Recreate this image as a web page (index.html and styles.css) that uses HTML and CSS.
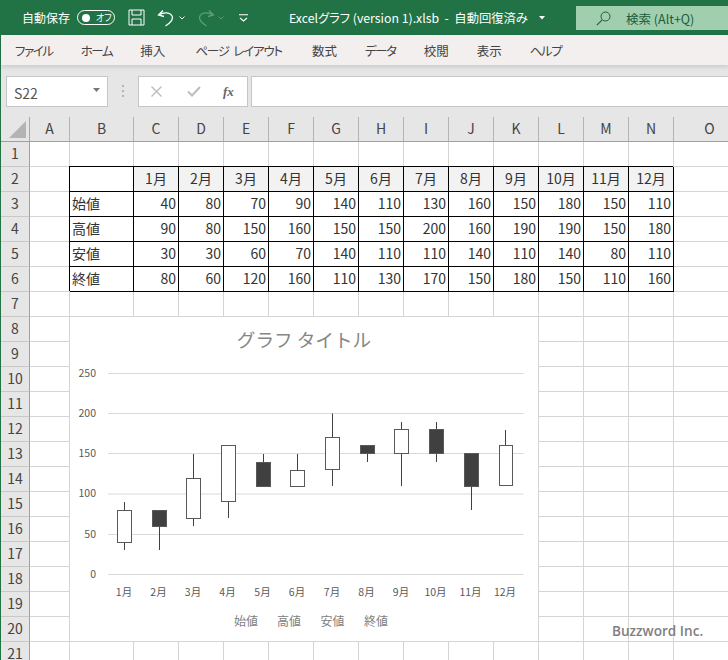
FILE: index.html
```html
<!DOCTYPE html>
<html lang="ja">
<head>
<meta charset="utf-8">
<title>Excelグラフ</title>
<link rel="stylesheet" href="styles.css">
</head>
<body>
<div class="app">
  <header class="titlebar">
    <span class="autosave">自動保存</span>
    <span class="toggle"><i class="knob"></i><span class="off">オフ</span></span>
    <svg class="ic save" viewBox="0 0 17 17"><path d="M1 1h15v15H1zM4 1v5h9V1M4 16v-6h9v6" fill="none" stroke="#fff" stroke-width="1"/></svg>
    <svg class="ic undo" viewBox="0 0 18 18"><path d="M6 1.5 1.5 6 7 7.5M1.8 6C6 3.500 12 2.500 14.800 6.500c2.200 3.500-1 7-6.300 10.500" fill="none" stroke="#fff" stroke-width="1.300"/></svg>
    <svg class="ic chev" viewBox="0 0 6 4"><path d="M.5.5 3 3 5.500.5" fill="none" stroke="#fff" stroke-width="1"/></svg>
    <svg class="ic redo" viewBox="0 0 18 18"><path d="M12 1.500 16.500 6 11 7.500M16.200 6C12 3.500 6 2.500 3.200 6.500 1 10 4.200 13.500 9.500 17" fill="none" stroke="#5f9c7c" stroke-width="1.300"/></svg>
    <svg class="ic chev chev2" viewBox="0 0 6 4"><path d="M.5.5 3 3 5.500.5" fill="none" stroke="#5f9c7c" stroke-width="1"/></svg>
    <svg class="ic cust" viewBox="0 0 9 8"><path d="M0 .8h9M1 4l3.500 3L8 4" fill="none" stroke="#fff" stroke-width="1.100"/></svg>
    <span class="doc">Excelグラフ (version 1).xlsb&nbsp; - &nbsp;自動回復済み</span>
    <svg class="ic doc-chev" viewBox="0 0 6 4"><path d="M0 0h6L3 3.500z" fill="#fff"/></svg>
    <div class="search">
      <svg class="ic glass" viewBox="0 0 15 15"><circle cx="9.500" cy="5.500" r="4.500" fill="none" stroke="#1d5c3a" stroke-width="1"/><path d="M6.200 8.800.8 14.200" stroke="#1d5c3a" stroke-width="1.100"/></svg>
      <span>検索 (Alt+Q)</span>
    </div>
  </header>

  <nav class="tabs">
    <span class="kana">ファイル</span><span class="kana">ホーム</span><span>挿入</span><span class="kana-long">ページ レイアウト</span><span>数式</span><span class="kana">データ</span><span>校閲</span><span>表示</span><span class="kana">ヘルプ</span>
  </nav>

  <section class="fbar">
    <div class="namebox"><span>S22</span><svg class="ic nb-arrow" viewBox="0 0 7 4"><path d="M0 0h7L3.500 4z" fill="#767676"/></svg></div>
    <svg class="ic dots" viewBox="0 0 2 12"><path d="M0 0h2v2H0zM0 5h2v2H0zM0 10h2v2H0z" fill="#b5b5b5"/></svg>
    <div class="fxbox">
      <svg class="ic cross" viewBox="0 0 11 11"><path d="M.5.5l10 10M10.500.5l-10 10" stroke="#bdbdbd" stroke-width="1.400" fill="none"/></svg>
      <svg class="ic check" viewBox="0 0 14 11"><path d="M1 5.500 5 9.500 13 1" stroke="#bdbdbd" stroke-width="2" fill="none"/></svg>
      <span class="fx">fx</span>
    </div>
    <div class="formula"></div>
  </section>

  <main class="sheet">
    <div class="corner"><svg class="tri" viewBox="0 0 17 17"><path d="M17 0v17H0z" fill="#b4b4b4"/></svg></div>
    <div class="ch">A</div><div class="ch">B</div><div class="ch">C</div><div class="ch">D</div><div class="ch">E</div><div class="ch">F</div><div class="ch">G</div><div class="ch">H</div><div class="ch">I</div><div class="ch">J</div><div class="ch">K</div><div class="ch">L</div><div class="ch">M</div><div class="ch">N</div><div class="ch">O</div>

    <div class="rh">1</div><div class="c"></div><div class="c"></div><div class="c"></div><div class="c"></div><div class="c"></div><div class="c"></div><div class="c"></div><div class="c"></div><div class="c"></div><div class="c"></div><div class="c"></div><div class="c"></div><div class="c"></div><div class="c"></div><div class="c"></div>

    <div class="rh">2</div><div class="c"></div><div class="c t"></div><div class="c t mon">1月</div><div class="c t mon">2月</div><div class="c t mon">3月</div><div class="c t mon">4月</div><div class="c t mon">5月</div><div class="c t mon">6月</div><div class="c t mon">7月</div><div class="c t mon">8月</div><div class="c t mon">9月</div><div class="c t mon">10月</div><div class="c t mon">11月</div><div class="c t mon">12月</div><div class="c"></div>

    <div class="rh">3</div><div class="c"></div><div class="c t lab">始値</div><div class="c t num">40</div><div class="c t num">80</div><div class="c t num">70</div><div class="c t num">90</div><div class="c t num">140</div><div class="c t num">110</div><div class="c t num">130</div><div class="c t num">160</div><div class="c t num">150</div><div class="c t num">180</div><div class="c t num">150</div><div class="c t num">110</div><div class="c"></div>

    <div class="rh">4</div><div class="c"></div><div class="c t lab">高値</div><div class="c t num">90</div><div class="c t num">80</div><div class="c t num">150</div><div class="c t num">160</div><div class="c t num">150</div><div class="c t num">150</div><div class="c t num">200</div><div class="c t num">160</div><div class="c t num">190</div><div class="c t num">190</div><div class="c t num">150</div><div class="c t num">180</div><div class="c"></div>

    <div class="rh">5</div><div class="c"></div><div class="c t lab">安値</div><div class="c t num">30</div><div class="c t num">30</div><div class="c t num">60</div><div class="c t num">70</div><div class="c t num">140</div><div class="c t num">110</div><div class="c t num">110</div><div class="c t num">140</div><div class="c t num">110</div><div class="c t num">140</div><div class="c t num">80</div><div class="c t num">110</div><div class="c"></div>

    <div class="rh">6</div><div class="c"></div><div class="c t lab">終値</div><div class="c t num">80</div><div class="c t num">60</div><div class="c t num">120</div><div class="c t num">160</div><div class="c t num">110</div><div class="c t num">130</div><div class="c t num">170</div><div class="c t num">150</div><div class="c t num">180</div><div class="c t num">150</div><div class="c t num">110</div><div class="c t num">160</div><div class="c"></div>

    <div class="rh">7</div><div class="c"></div><div class="c"></div><div class="c"></div><div class="c"></div><div class="c"></div><div class="c"></div><div class="c"></div><div class="c"></div><div class="c"></div><div class="c"></div><div class="c"></div><div class="c"></div><div class="c"></div><div class="c"></div><div class="c"></div>
    <div class="rh">8</div><div class="c"></div><div class="c"></div><div class="c"></div><div class="c"></div><div class="c"></div><div class="c"></div><div class="c"></div><div class="c"></div><div class="c"></div><div class="c"></div><div class="c"></div><div class="c"></div><div class="c"></div><div class="c"></div><div class="c"></div>
    <div class="rh">9</div><div class="c"></div><div class="c"></div><div class="c"></div><div class="c"></div><div class="c"></div><div class="c"></div><div class="c"></div><div class="c"></div><div class="c"></div><div class="c"></div><div class="c"></div><div class="c"></div><div class="c"></div><div class="c"></div><div class="c"></div>
    <div class="rh">10</div><div class="c"></div><div class="c"></div><div class="c"></div><div class="c"></div><div class="c"></div><div class="c"></div><div class="c"></div><div class="c"></div><div class="c"></div><div class="c"></div><div class="c"></div><div class="c"></div><div class="c"></div><div class="c"></div><div class="c"></div>
    <div class="rh">11</div><div class="c"></div><div class="c"></div><div class="c"></div><div class="c"></div><div class="c"></div><div class="c"></div><div class="c"></div><div class="c"></div><div class="c"></div><div class="c"></div><div class="c"></div><div class="c"></div><div class="c"></div><div class="c"></div><div class="c"></div>
    <div class="rh">12</div><div class="c"></div><div class="c"></div><div class="c"></div><div class="c"></div><div class="c"></div><div class="c"></div><div class="c"></div><div class="c"></div><div class="c"></div><div class="c"></div><div class="c"></div><div class="c"></div><div class="c"></div><div class="c"></div><div class="c"></div>
    <div class="rh">13</div><div class="c"></div><div class="c"></div><div class="c"></div><div class="c"></div><div class="c"></div><div class="c"></div><div class="c"></div><div class="c"></div><div class="c"></div><div class="c"></div><div class="c"></div><div class="c"></div><div class="c"></div><div class="c"></div><div class="c"></div>
    <div class="rh">14</div><div class="c"></div><div class="c"></div><div class="c"></div><div class="c"></div><div class="c"></div><div class="c"></div><div class="c"></div><div class="c"></div><div class="c"></div><div class="c"></div><div class="c"></div><div class="c"></div><div class="c"></div><div class="c"></div><div class="c"></div>
    <div class="rh">15</div><div class="c"></div><div class="c"></div><div class="c"></div><div class="c"></div><div class="c"></div><div class="c"></div><div class="c"></div><div class="c"></div><div class="c"></div><div class="c"></div><div class="c"></div><div class="c"></div><div class="c"></div><div class="c"></div><div class="c"></div>
    <div class="rh">16</div><div class="c"></div><div class="c"></div><div class="c"></div><div class="c"></div><div class="c"></div><div class="c"></div><div class="c"></div><div class="c"></div><div class="c"></div><div class="c"></div><div class="c"></div><div class="c"></div><div class="c"></div><div class="c"></div><div class="c"></div>
    <div class="rh">17</div><div class="c"></div><div class="c"></div><div class="c"></div><div class="c"></div><div class="c"></div><div class="c"></div><div class="c"></div><div class="c"></div><div class="c"></div><div class="c"></div><div class="c"></div><div class="c"></div><div class="c"></div><div class="c"></div><div class="c"></div>
    <div class="rh">18</div><div class="c"></div><div class="c"></div><div class="c"></div><div class="c"></div><div class="c"></div><div class="c"></div><div class="c"></div><div class="c"></div><div class="c"></div><div class="c"></div><div class="c"></div><div class="c"></div><div class="c"></div><div class="c"></div><div class="c"></div>
    <div class="rh">19</div><div class="c"></div><div class="c"></div><div class="c"></div><div class="c"></div><div class="c"></div><div class="c"></div><div class="c"></div><div class="c"></div><div class="c"></div><div class="c"></div><div class="c"></div><div class="c"></div><div class="c"></div><div class="c"></div><div class="c"></div>
    <div class="rh">20</div><div class="c"></div><div class="c"></div><div class="c"></div><div class="c"></div><div class="c"></div><div class="c"></div><div class="c"></div><div class="c"></div><div class="c"></div><div class="c"></div><div class="c"></div><div class="c"></div><div class="c"></div><div class="c"></div><div class="c"></div>
    <div class="rh">21</div><div class="c"></div><div class="c"></div><div class="c"></div><div class="c"></div><div class="c"></div><div class="c"></div><div class="c"></div><div class="c"></div><div class="c"></div><div class="c"></div><div class="c"></div><div class="c"></div><div class="c"></div><div class="c"></div><div class="c"></div>

    <svg class="chart" viewBox="70 317 468 324">
      <text class="ctitle" x="304" y="347">グラフ タイトル</text>
      <g class="grid">
        <path d="M108 373.500H523.500M108 413.500H523.500M108 453.500H523.500M108 494H523.500M108 534.500H523.500M108 574.500H523.500"/>
      </g>
      <g class="yaxis">
        <text x="96" y="377">250</text><text x="96" y="417">200</text><text x="96" y="457">150</text><text x="96" y="497">100</text><text x="96" y="537.500">50</text><text x="96" y="577.500">0</text>
      </g>
      <g class="wick">
        <path d="M124.500 502V550M159.500 526V550M193.500 454V526M228.500 502V518M263.500 454V462M297.500 454V470M332.500 413.500V486M367.500 454V462M401.500 422V486M436.500 422V462M471.500 486V510M505.500 430V446"/>
      </g>
      <g class="up">
        <rect x="117.500" y="510.500" width="14" height="32"/>
        <rect x="186.500" y="478.500" width="14" height="40"/>
        <rect x="221.500" y="445.500" width="14" height="56"/>
        <rect x="290.500" y="470.500" width="14" height="16"/>
        <rect x="325.500" y="437.500" width="14" height="32"/>
        <rect x="394.500" y="429.500" width="14" height="24"/>
        <rect x="499.500" y="445.500" width="13" height="40"/>
      </g>
      <g class="down">
        <rect x="152.500" y="510.500" width="14" height="16"/>
        <rect x="256.500" y="462.500" width="14" height="24"/>
        <rect x="360.500" y="445.500" width="14" height="8"/>
        <rect x="429.500" y="429.500" width="14" height="24"/>
        <rect x="464.500" y="453.500" width="14" height="33"/>
      </g>
      <g class="xaxis">
        <text x="124" y="596">1月</text><text x="158.500" y="596">2月</text><text x="193" y="596">3月</text><text x="227.500" y="596">4月</text><text x="262.500" y="596">5月</text><text x="297" y="596">6月</text><text x="332" y="596">7月</text><text x="366.500" y="596">8月</text><text x="401" y="596">9月</text><text x="435.500" y="596">10月</text><text x="470.500" y="596">11月</text><text x="505" y="596">12月</text>
      </g>
      <g class="legend">
        <text x="246" y="626">始値</text><text x="289" y="626">高値</text><text x="332.500" y="626">安値</text><text x="376" y="626">終値</text>
      </g>
    </svg>
  </main>
  <div class="mark">Buzzword Inc.</div>
</div>
</body>
</html>
```
FILE: styles.css
```css
html, body { margin: 0; padding: 0; }
body { width: 728px; height: 660px; overflow: hidden; background: #fff; }
.app {
  position: relative;
  width: 728px; height: 660px; overflow: hidden;
  font-family: "Noto Sans CJK JP", "Noto Sans", sans-serif;
  color: #333;
}
.ic { display: block; flex: none; }

/* title bar */
.titlebar {
  height: 35px; background: #217346; color: #fff;
  display: flex; align-items: center;
  padding-left: 22px; box-sizing: border-box;
  font-size: 12px;
}
.autosave { width: 48px; white-space: nowrap; font-feature-settings: "palt"; font-size: 12px; }
.toggle {
  margin-left: 7px; width: 38px; height: 15px; box-sizing: border-box;
  border: 1px solid #fff; border-radius: 8px;
  display: flex; align-items: center; padding-left: 4px;
}
.knob { width: 8px; height: 8px; border-radius: 50%; background: #fff; flex: none; }
.off { font-size: 9px; margin-left: 6px; line-height: 12px; font-feature-settings: "palt"; }
.save { width: 17px; height: 17px; margin-left: 13px; }
.undo { width: 18px; height: 18px; margin-left: 12px; }
.chev { width: 6px; height: 4px; margin-left: 4px; }
.redo { width: 18px; height: 18px; margin-left: 12px; }
.chev2 { margin-left: 3px; }
.cust { width: 9px; height: 8px; margin-left: 15px; }
.doc { margin-left: 41px; width: 247px; white-space: nowrap; font-size: 12.300px; font-feature-settings: "palt"; }
.doc-chev { width: 6px; height: 4px; margin-left: 3px; }
.search {
  margin-left: 31px; align-self: flex-start; margin-top: 6px;
  width: 152px; height: 24px; background: #a0cfb0; color: #1d5c3a;
  display: flex; align-items: center; padding-left: 20px; box-sizing: border-box;
  font-size: 12.500px;
}
.glass { width: 15px; height: 15px; margin-right: 15px; }

/* ribbon tabs */
.tabs {
  position: relative;
  height: 30px; background: #f3efef;
  display: flex; align-items: center; gap: 28px;
  padding-left: 14px;
  margin-left: 1px;
  font-size: 12.500px; color: #444;
  font-feature-settings: "palt";
  box-shadow: 0 2px 4px rgba(0,0,0,.12);
}
.kana { letter-spacing: -1.400px; }
.kana-long { letter-spacing: -1.200px; word-spacing: 3px; margin: 0 2px; }

/* formula bar */
.fbar {
  height: 52px; background: #e6e6e6; margin-left: 1px;
  display: flex; align-items: flex-start;
  padding-top: 11px; box-sizing: border-box;
}
.namebox, .fxbox, .formula {
  height: 31px; background: #fff; border: 1px solid #c6c6c6; box-sizing: border-box;
}
.namebox {
  margin-left: 5px; width: 102px; display: flex; align-items: center;
  padding-left: 7px; font-size: 14px; color: #555;
}
.namebox span { flex: 1; padding-top: 3px; }
.nb-arrow { width: 7px; height: 4px; margin-right: 7px; margin-bottom: 3px; }
.dots { width: 2px; height: 12px; margin: 9px 0 0 14px; }
.fxbox {
  margin-left: 14px; width: 110px; display: flex; align-items: center;
  padding-left: 12px;
}
.cross { width: 11px; height: 11px; }
.check { width: 14px; height: 11px; margin-left: 25px; }
.fx {
  margin-left: 22px; font: italic bold 13px "Liberation Serif", serif; color: #666;
}
.formula { margin-left: 3px; flex: 1; border-right: 0; }

/* sheet */
.sheet {
  position: relative;
  display: grid;
  margin-left: 1px;
  grid-template-columns: 29px 40px 64px repeat(12, 45px) 72px;
  grid-auto-rows: 25px;
  font-size: 14px;
}
.app::before {
  content: ""; position: absolute; left: 0; top: 35px; bottom: 0; width: 1px; background: #217346;
}
.corner { background: #e6e6e6; border-right: 1px solid #a8a8a8; border-bottom: 1px solid #a0a0a0; box-sizing: border-box; position: relative; }
.tri { position: absolute; left: 8px; top: 4px; width: 17px; height: 17px; }
.ch, .rh {
  background: #e6e6e6; box-sizing: border-box; color: #444;
  display: flex; align-items: center; justify-content: center;
  line-height: 11px; padding-bottom: 2px;
}
.ch { border-right: 1px solid #b4b4b4; border-bottom: 1px solid #a0a0a0; }
.rh { border-right: 1px solid #a0a0a0; border-bottom: 1px solid #c8c8c8; }
.c {
  box-sizing: border-box; background: #fff;
  border-right: 1px solid #d4d4d4; border-bottom: 1px solid #d4d4d4;
  display: flex; align-items: center; line-height: 1; color: #333;
  white-space: nowrap; padding-bottom: 2px;
}
.t { border-right-color: #000; border-bottom-color: #000; box-shadow: -1px -1px 0 0 #000; }
.mon { background: #f2f2f2; justify-content: center; }
.num { justify-content: flex-end; padding-right: 2px; }
.lab { padding-left: 2px; }

/* chart */
.chart {
  position: absolute; left: 69px; top: 200px;
  width: 468px; height: 324px; background: #fff; display: block;
  font-family: "Noto Sans CJK JP", "Noto Sans", sans-serif;
}
.ctitle { font-size: 18.600px; fill: #868686; text-anchor: middle; }
.grid path { stroke: #d9d9d9; stroke-width: 1; fill: none; }
.yaxis text { font-size: 10.500px; fill: #595959; text-anchor: end; }
.xaxis text { font-size: 10.500px; fill: #595959; text-anchor: middle; }
.legend text { font-size: 12px; fill: #808080; text-anchor: middle; }
.wick path { stroke: #404040; stroke-width: 1; fill: none; }
.up rect { fill: #fff; stroke: #595959; stroke-width: 1; }
.down rect { fill: #404040; stroke: #595959; stroke-width: 1; }

.mark {
  position: absolute; left: 612px; top: 622px;
  font: 600 13.600px/18px "Open Sans", sans-serif; color: #7f7f7f; white-space: nowrap;
}
```
